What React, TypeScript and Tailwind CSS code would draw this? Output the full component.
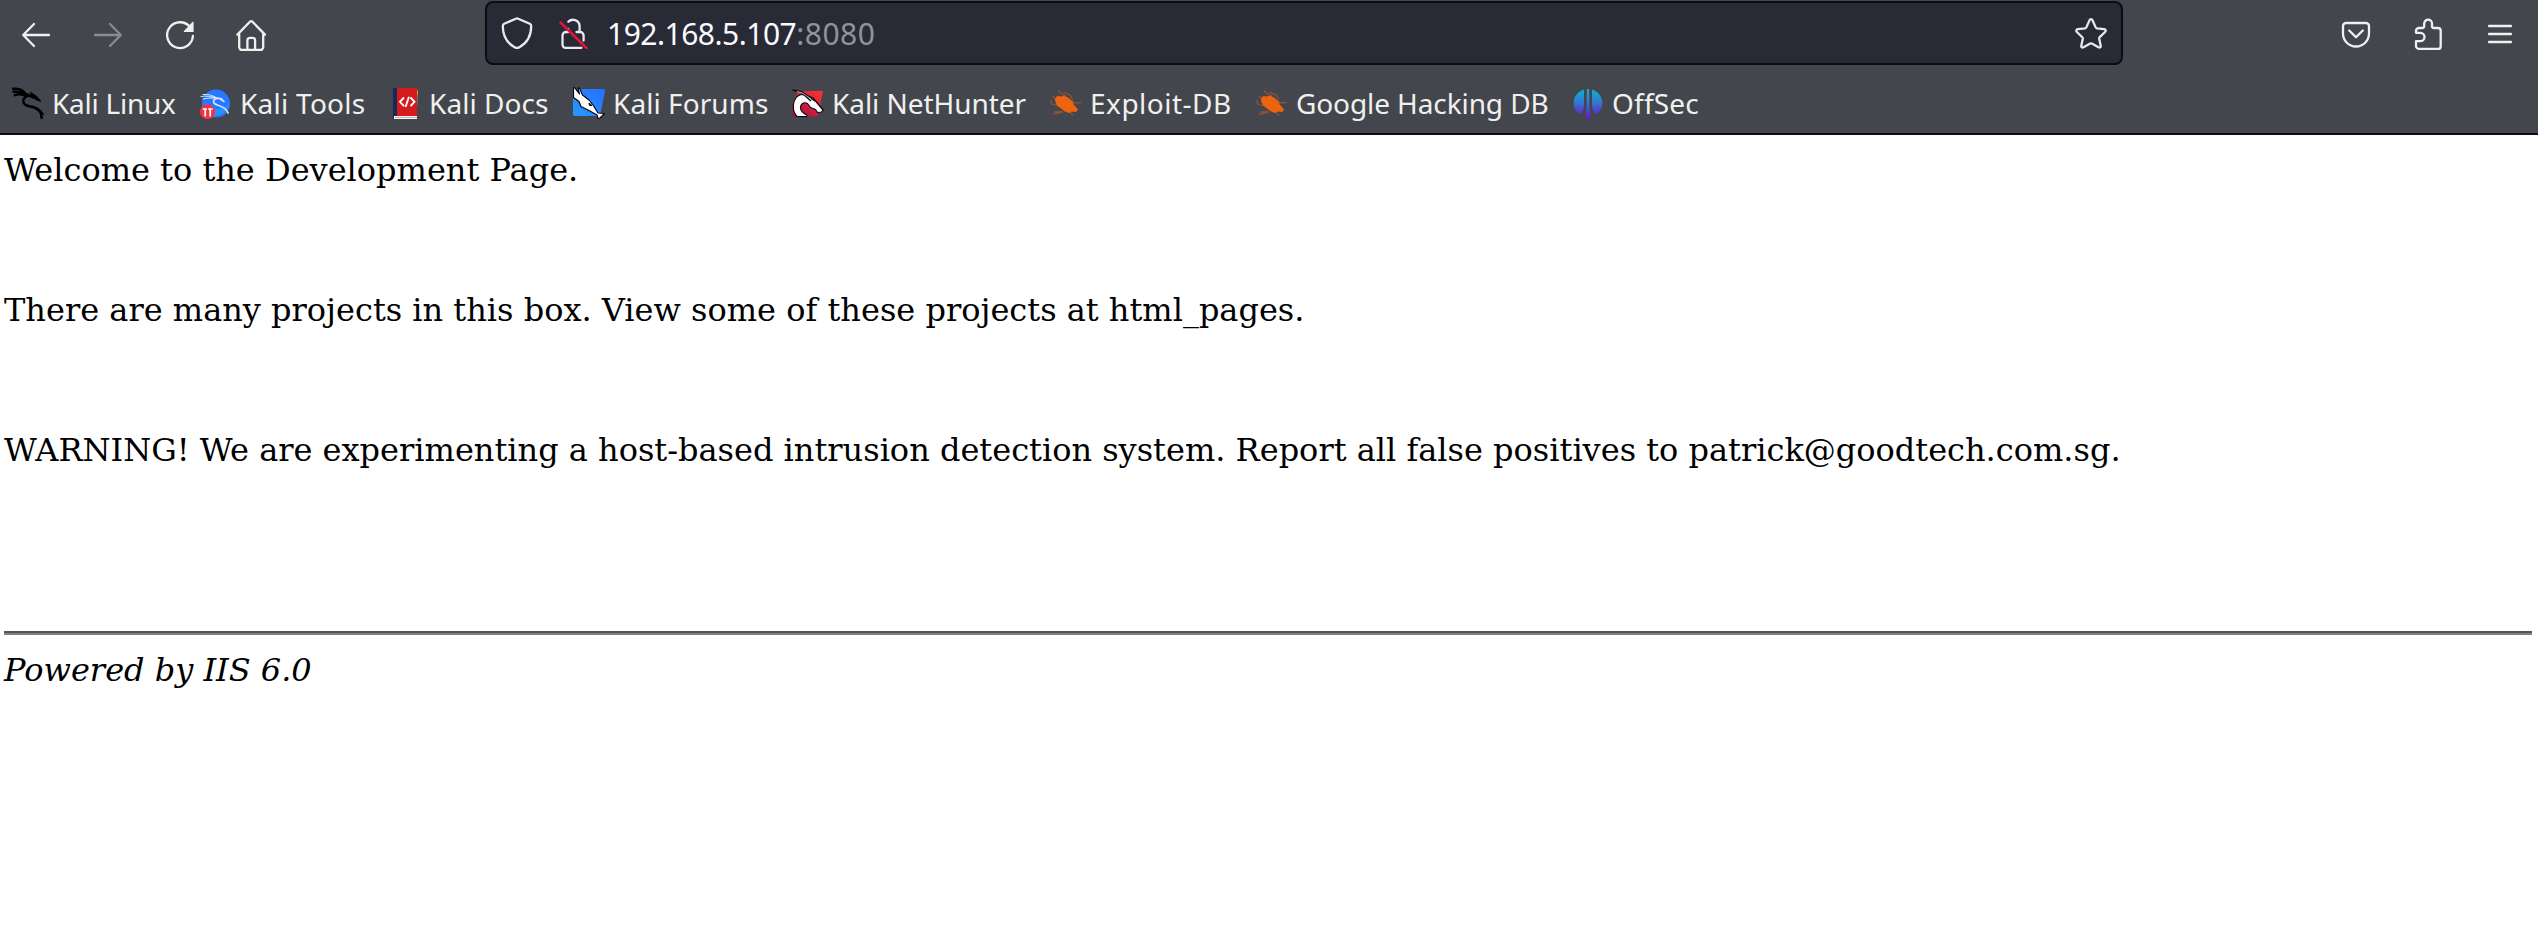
import React from "react";

type IconProps = { className?: string };

const stroke = {
  fill: "none",
  stroke: "currentColor",
  strokeWidth: 2.3,
  strokeLinecap: "round" as const,
  strokeLinejoin: "round" as const,
};

function Icon({ className = "", children }: IconProps & { children: React.ReactNode }) {
  return (
    <svg viewBox="0 0 32 32" className={`size-8 shrink-0 ${className}`} {...stroke}>
      {children}
    </svg>
  );
}

const Back = () => (
  <Icon className="text-[#f0f0ee]">
    <path d="M29 16H3.500M14 5 3.200 16 14 27" />
  </Icon>
);
const Forward = () => (
  <Icon className="text-[#8b8b8e]">
    <path d="M3 16h25.500M18 5l10.800 11L18 27" />
  </Icon>
);
const Reload = () => (
  <Icon className="text-[#f0f0ee]">
    <path d="M26.200 8.200A12.900 12.900 0 1 0 28.900 17" />
    <path d="M29.600 3.400v9.200a.5.5 0 0 1-.5.5h-8.600c-.7 0-1-.8-.5-1.200l8.400-9c.5-.5 1.200-.2 1.200.5z" fill="currentColor" stroke="none" />
  </Icon>
);
const Home = () => (
  <Icon className="text-[#f0f0ee]">
    <path d="M1.400 15.600 13.900 2.800a1.800 1.800 0 0 1 2.600 0L29 15.600M3.200 14v14a3 3 0 0 0 3 3h18a3 3 0 0 0 3-3V14M11.400 30.600v-9.200a2.600 2.600 0 0 1 2.600-2.600h2.500a2.600 2.600 0 0 1 2.600 2.600v9.200" />
  </Icon>
);
const Shield = () => (
  <Icon className="text-[#e9e9ec]">
    <path d="M14.800 1.700a3 3 0 0 1 2.400 0l11.600 5.100c1 .5 1.400 1.200 1.400 2.200 0 9-3.400 16.400-11.400 21a5.200 5.200 0 0 1-5.600 0C5.200 25.400 1.800 18 1.800 9c0-1 .4-1.700 1.400-2.200z" />
  </Icon>
);
const BrokenLock = () => (
  <Icon className="text-[#e9e9ec]">
    <path d="M10.300 4.800A6.600 6.600 0 0 1 21.600 8.800v6M10.200 14.800v-3M18.500 15h3.600a3.500 3.500 0 0 1 3.500 3.500v5M10.500 15h-2.500a3.500 3.500 0 0 0-3.500 3.500v9.300a3 3 0 0 0 3 3h16" />
    <path d="M2.500 5.500 28.500 31" stroke="#e2143f" strokeWidth="2.600" />
  </Icon>
);
const Star = () => (
  <Icon className="text-[#e9e9ec]">
    <path d="M14.600 3.100c.6-1.300 2.200-1.300 2.800 0l3.300 7.300c.2.500.6.800 1.200.9l7.300.9c1.500.2 2 1.700.9 2.800l-5.400 5.200c-.4.400-.6.900-.5 1.500l1.500 7c.3 1.500-.9 2.300-2.200 1.600l-6.700-3.700c-.5-.3-1.100-.3-1.600 0l-6.700 3.700c-1.300.7-2.500-.1-2.200-1.600l1.500-7c.1-.6-.1-1.100-.5-1.500L1.900 15c-1.100-1.100-.6-2.600.9-2.800l7.300-.9c.6-.1 1-.4 1.200-.9z" />
  </Icon>
);
const Pocket = () => (
  <Icon className="text-[#f0f0ee]">
    <path d="M6 5h20a3 3 0 0 1 3 3v7.500a13 13 0 0 1-26 0V8a3 3 0 0 1 3-3zM9.200 12.500l6.800 6.800 6.800-6.800" />
  </Icon>
);
const Puzzle = () => (
  <Icon className="text-[#f0f0ee]">
    <path d="M4 14.800V13a3 3 0 0 1 3-3h3.200a2 2 0 0 0 2-2V5.600a3.900 3.900 0 0 1 7.800 0V8a2 2 0 0 0 2 2h4a2.700 2.700 0 0 1 2.700 2.700v15.500a2.700 2.700 0 0 1-2.700 2.700H7a3 3 0 0 1-3-3v-4.700h4.300a4.200 4.200 0 0 0 0-8.400z" />
  </Icon>
);
const Menu = () => (
  <Icon className="text-[#f0f0ee]">
    <path d="M5 8h22M5 16h22M5 24h22" />
  </Icon>
);

const Dragon = () => (
  <Icon className="text-black">
    <path d="M.8 1.700c5-.5 9 .7 12 3.800M1.500 4.700c4-.5 7.500.2 10.500 2.200M2.800 8.200c3-1.200 6-1.200 9.500-.2M12 6c3 2 6 2 9 4M22.500 9c-5-1.500-11 .5-11.300 4.600-.2 4.800 5 5.600 9.800 6.600 5 1.200 8.500 5 8.700 11" strokeWidth="2.400" />
    <path d="M18.500 5.500 24 9.200l4.500 5c-2-.4-4-1-5.500-2.500l-6-2.500 4-.3zM20 19c5 1.200 9 3.700 11.500 8.500l-3-2.500-6-3.500z" fill="currentColor" strokeWidth="1.200" />
  </Icon>
);
const ToolsLogo = () => (
  <svg viewBox="0 0 32 32" className="size-8 shrink-0">
    <circle cx="16" cy="16.600" r="14" fill="#2777ff" />
    <path d="M2.300 19a14 14 0 0 0 27-1.500c-7 6-20 6-27 1.500z" fill="#2593ff" />
    <g fill="none" stroke="#d3e3ff" strokeLinecap="round">
      <path d="M1 9.500c5-1 10 0 14 1.500M3 7.500c5-.5 10 1 13 3M3 12c4-1 8-1.200 12-.8" strokeWidth="1" />
      <path d="M12 10c4 1 8 .5 12 4.500M22 12c-5-2-10 .5-8 4 2 3.500 11 1.500 14 10" strokeWidth="1.700" />
    </g>
    <circle cx="7.500" cy="24.700" r="7.500" fill="#f5333e" />
    <path d="M2.700 22h4.300M8.300 22h4.300M5.200 22v7.500M10.200 22v7.500" stroke="#fff" strokeWidth="1.700" fill="none" />
  </svg>
);
const DocsLogo = () => (
  <svg viewBox="0 0 32 32" className="size-8 shrink-0">
    <path d="M26 3h3v5h-3z" fill="#e98a1c" />
    <path d="M26 8h3v4h-3z" fill="#4c9b47" />
    <path d="M26 12h3v6h-3z" fill="#3372a5" />
    <path d="M4 1h4v28l-4 3z" fill="#15295c" />
    <path d="M8 1h20v28H8z" fill="#d61a1c" />
    <path d="M5 29h23v3H5z" fill="#f6f6f6" />
    <path d="M6 30.500h22" stroke="#8d8d91" strokeWidth=".6" />
    <path d="m15 10.500-4 4.300 4 4.300M21.500 10.500l4 4.300-4 4.300M20 9.800l-3.500 10.200" fill="none" stroke="#fff" strokeWidth="1.900" />
  </svg>
);
const ForumsLogo = () => (
  <svg viewBox="0 0 32 32" className="size-8 shrink-0">
    <defs>
      <linearGradient id="forums" x1="0" y1="1" x2="1" y2="0">
        <stop offset="0" stopColor="#249cff" />
        <stop offset="1" stopColor="#276cff" />
      </linearGradient>
    </defs>
    <path d="M5 2h25.500c1 0 1.700.8 1.500 2l-4.600 23c-.3 1.300-1 2-2.400 2H2c-1.200 0-2-.8-2-2V5z" fill="url(#forums)" />
    <path d="M.5 1v9.500l5.500 4 2 5 8 4 8 4.500 1 3.500 2-.5 4.500-4.500-6.500-.5-5-8-4-5L9.500 8 6.500 1 5 1l1.500 6L1.500.5z" fill="#fff" stroke="#08090d" strokeWidth="1.200" strokeLinejoin="round" />
    <path d="m2 1 5 6M16 16l3 2.500h-2.500z" fill="#08090d" stroke="#08090d" strokeWidth="1" />
  </svg>
);
const HunterLogo = () => (
  <svg viewBox="0 0 32 32" className="size-8 shrink-0">
    <defs>
      <linearGradient id="hunter" x1="0" y1="1" x2="1" y2="0">
        <stop offset="0" stopColor="#9d0d4d" />
        <stop offset="1" stopColor="#ff3431" />
      </linearGradient>
    </defs>
    <path d="M6 4h25l-5 23.500c-.3 1.300-1 2-2.400 2H2c-1.200 0-2-.8-2-2V18z" fill="url(#hunter)" />
    <path d="M5 29.500C-1 23 .5 10 9 7.500l5 .5 7 3 5 6 5 6-1.500 2-4 .5-2-3-5-2-3-4c-4-2-7 .5-7 4 0 4 3 6 7 8l-1 1.200z" fill="#fff" stroke="#08090d" strokeWidth="1.200" strokeLinejoin="round" />
    <path d="M.5 3 10 5l13 9M11 7l8 7" fill="none" stroke="#08090d" strokeWidth="1.500" />
    <path d="m5 4.500 5 1.300 9 6" fill="none" stroke="#c9c9cb" strokeWidth=".8" />
  </svg>
);
const ExploitLogo = () => (
  <svg viewBox="0 0 32 32" className="size-8 shrink-0">
    <g fill="none" stroke="#a9552d" strokeWidth="1.300" opacity=".75">
      <path d="m8 3.500 3 3 5 2.500M13 5l7 3 3 5M3 9l3 4M.7 13l1 4 7 2M22 15.800l9-.2M3 27.300l10-2.300M4 25l8-.5M20 25l3 3.500M24 15l4 1.500" />
    </g>
    <path d="m5 12 2-3 4 .5 3-1 4 2 3 2.500 2 1.500.5 3 3.500 3.500 1 2-2 2-4-.5-3 1.500-4-1.500-4-3-4-3-1.500-3z" fill="#ee630f" />
  </svg>
);
const OffSecLogo = () => (
  <svg viewBox="0 0 32 32" className="size-8 shrink-0">
    <defs>
      <linearGradient id="offsec" x1="0" y1="1" x2="0" y2="31" gradientUnits="userSpaceOnUse">
        <stop offset="0" stopColor="#05bccb" />
        <stop offset=".5" stopColor="#3574d2" />
        <stop offset="1" stopColor="#6718c9" />
      </linearGradient>
    </defs>
    <g fill="url(#offsec)">
      <path d="M12 2.500V18c0 4-1.500 7-4 9.500C-1.500 21-.5 6.500 12 2.500zM20 2.500V18c0 4 1.500 7 4 9.500C33.500 21 32.500 6.500 20 2.500zM15 2h2l.5 17 1 13h-5l1-13z" />
    </g>
  </svg>
);

const bookmarks = [
  { label: "Kali Linux", Logo: Dragon, width: "w-[188px]", spacing: "tracking-[-0.25px]" },
  { label: "Kali Tools", Logo: ToolsLogo, width: "w-[189px]", spacing: "tracking-[0.25px]" },
  { label: "Kali Docs", Logo: DocsLogo, width: "w-[184px]", spacing: "tracking-[0.05px]" },
  { label: "Kali Forums", Logo: ForumsLogo, width: "w-[219px]", spacing: "tracking-[0.06px]" },
  { label: "Kali NetHunter", Logo: HunterLogo, width: "w-[258px]", spacing: "tracking-[-0.05px]" },
  { label: "Exploit-DB", Logo: ExploitLogo, width: "w-[206px]", spacing: "tracking-[0.5px]" },
  { label: "Google Hacking DB", Logo: ExploitLogo, width: "w-[316px]", spacing: "tracking-[-0.1px]" },
  { label: "OffSec", Logo: OffSecLogo, width: "w-[140px]", spacing: "tracking-[0.2px]" },
];

export default function App() {
  return (
    <div className="h-[931px] w-[2538px] overflow-hidden bg-white">
      <header className="h-[135px] border-b-2 border-[#0c0c12] bg-[#44464d] font-['Noto_Sans',sans-serif]">
        <div className="flex h-[66px] pt-px">
          <nav className="flex w-[485px] items-center gap-10 pt-0.5 pl-5">
            <Back />
            <Forward />
            <Reload />
            <Home />
          </nav>
          <div className="flex h-16 w-[1638px] items-center rounded-lg border-2 border-[#0c0c12] bg-[#282a36] pr-3.5 pl-3.5">
            <Shield />
            <div className="ml-[25px]">
              <BrokenLock />
            </div>
            <div className="ml-[17px] flex-1 pt-0.5 text-[30px] leading-none tracking-[-0.5px] whitespace-nowrap text-[#fbfbfe]">
              192.168.5.107<span className="tracking-[0.5px] text-[#929298]">:8080</span>
            </div>
            <Star />
          </div>
          <div className="flex flex-1 items-center justify-end gap-10 pr-[22px]">
            <Pocket />
            <Puzzle />
            <Menu />
          </div>
        </div>
        <div className="flex h-[67px] items-center pt-1.5 pl-3">
          {bookmarks.map(({ label, Logo, width, spacing }) => (
            <div key={label} className={`flex shrink-0 items-center gap-2 ${width}`}>
              <Logo />
              <span className={`text-[28px] leading-none whitespace-nowrap text-[#f0f0ee] ${spacing}`}>{label}</span>
            </div>
          ))}
        </div>
      </header>
      <main className="pt-4 pr-1.5 pl-1 font-['DejaVu_Serif',serif] text-[32px] leading-[38px] text-black">
        <p>Welcome to the Development Page.</p>
        <p className="mt-[102px]">There are many projects in this box. View some of these projects at html_pages.</p>
        <p className="mt-[102px]">
          WARNING! We are experimenting a host-based intrusion detection system. Report all false positives to
          patrick@goodtech.com.sg.
        </p>
        <div role="separator" className="mt-[162px]">
          <div className="h-0.5 bg-[#555555]" />
          <div className="h-0.5 bg-[#808080]" />
        </div>
        <p className="mt-4 italic">Powered by IIS 6.0</p>
      </main>
    </div>
  );
}
